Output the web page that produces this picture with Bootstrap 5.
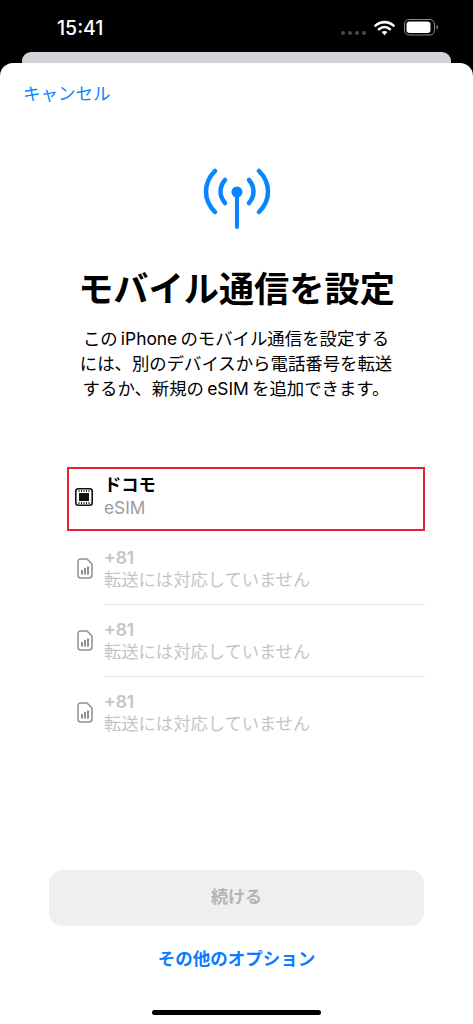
<!DOCTYPE html>
<html lang="ja"><head><meta charset="utf-8">
<link href="https://cdn.jsdelivr.net/npm/bootstrap@5.3.0/dist/css/bootstrap.min.css" rel="stylesheet">
<style>
html,body{height:1024px;overflow:hidden;background:#000}
body{font-family:"Inter","Liberation Sans","Noto Sans CJK JP",sans-serif;width:473px}
.sbar{height:52px;padding:0 0 0 57px;color:#fff}
.clock{font-size:19.5px;font-weight:500;line-height:1;padding-top:19px;width:240px}
.dots{gap:3px;margin:31px 0 0 44px}
.dots i{display:block;width:4px;height:4px;border-radius:50%;background:#4a4a4a}
.wifi{margin:20px 0 0 8px}
.batt{margin:19px 0 0 9px}
.backcard{height:11px;margin:0 22px;background:#d3d2d7;border-radius:9px 9px 0 0}
.sheet{height:961px;background:#fff;border-radius:13px 13px 0 0}
.cancel{color:#0a84ff;font-size:17.5px;line-height:20px;padding:21px 0 0 23px;text-decoration:none;display:block;height:105px}
.ant{display:block;margin:0 auto}
.heading{font-size:35.2px;font-weight:700;line-height:42px;margin:38px 0 0;color:#000;text-align:center}
.desc{font-size:17.4px;line-height:25px;margin:16px 0 0 -1px;color:#000;text-align:center}
.simlist{margin:66px 48px 121px 67px}
.simrow{height:72px}
.simrow.sel{height:64px;border:2px solid #e8202f;margin-bottom:2px}
.simico{width:35px;flex:none;display:flex;justify-content:center;padding-bottom:2px}
.sel .simico{width:30px;padding-bottom:4px}
.simtxt{flex:1;font-size:17.3px;line-height:22px;height:72px;padding-top:14px;border-bottom:1px solid #e5e5e7;margin-left:2px}
.simrow:last-child .simtxt{border-bottom:0}
.sel .simtxt{border:0;height:auto;padding-top:0;margin:-6px 0 0 5px}
.n1{font-weight:700;color:#000;line-height:22px}
.n2{color:#9b9b9f;line-height:23px}
.off{color:#c5c5c7}
.off-num{font-weight:600}
.cta.btn,.cta.btn:disabled{margin:0 0 0 49px;height:56px;width:375px;background:#efeff0;color:#b3b3b5;font-weight:700;font-size:17px;border-radius:14px;border:0;opacity:1;display:flex;align-items:center;justify-content:center}
.more{display:block;text-align:center;color:#0a7cff;font-weight:700;font-size:17.5px;line-height:22px;margin-top:22px;text-decoration:none}
.homebar{width:169px;height:5px;border-radius:3px;background:#000;margin:40px auto 0 152px}
</style></head><body>
<div class="sbar d-flex">
  <div class="clock">15:41</div>
  <div class="dots d-flex"><i></i><i></i><i></i><i></i></div>
  <svg class="wifi" width="21" height="16" viewBox="0 0 21 16"><path d="M1.5 5.6C6.6.9 14.4.9 19.5 5.6" fill="none" stroke="#fff" stroke-width="2.6" stroke-linecap="round"/><path d="M5 9.2c3.2-2.900 7.800-2.900 11 0" fill="none" stroke="#fff" stroke-width="2.6" stroke-linecap="round"/><path d="M7.6 12.1c1.8-1.5 4-1.5 5.8 0L10.500 15.200z" fill="#fff"/></svg>
  <svg class="batt" width="35" height="17" viewBox="0 0 35 17"><rect x=".5" y=".5" width="30" height="15.5" rx="4.5" fill="none" stroke="#8a8a8a"/><rect x="2.5" y="2.5" width="24" height="11.5" rx="3" fill="#fff"/><path d="M32.5 6v4.500c1-.3 1.600-1.200 1.600-2.200s-.6-2-1.600-2.300z" fill="#8a8a8a"/></svg>
</div>
<div class="backcard"></div>
<div class="sheet">
  <a class="cancel" href="#">キャンセル</a>
  <svg class="ant" width="70" height="62" viewBox="0 0 70 62" fill="none" stroke="#0a84ff" stroke-linecap="round">
    <path d="M13 3C1 15 1 32 13 44M57 3c12 12 12 29 0 41" stroke-width="4.5"/>
    <path d="M23 12c-6 7-6 16 0 23M47 12c6 7 6 16 0 23" stroke-width="4.5"/>
    <circle cx="35" cy="24" r="5.5" fill="#0a84ff" stroke="none"/>
    <path d="M35 26V59" stroke-width="4"/>
  </svg>
  <h1 class="heading">モバイル通信を設定</h1>
  <p class="desc">この&#8201;iPhone&#8201;のモバイル通信を設定する<br>には、別のデバイスから電話番号を転送<br>するか、新規の&#8201;eSIM&#8201;を追加できます。</p>
  <div class="simlist">
    <div class="simrow sel d-flex align-items-center">
      <div class="simico"><svg width="20" height="20" viewBox="0 0 20 20"><rect x="1.8" y="1.8" width="16.4" height="16.4" rx="2.5" fill="none" stroke="#111" stroke-width="1.6"/><rect x="5" y="6" width="10" height="8" fill="#111"/><path d="M5 3v2M7.500 3v2M10 3v2M12.500 3v2M15 3v2M5 15v2M7.500 15v2M10 15v2M12.500 15v2M15 15v2" stroke="#111" stroke-width="1"/></svg></div>
      <div class="simtxt"><div class="n1">ドコモ</div><div class="n2">eSIM</div></div>
    </div>
    <div class="simrow d-flex align-items-center">
      <div class="simico"><svg width="16" height="21" viewBox="0 0 16 21" fill="none"><path d="M3.500 1H10l5 5v11a3 3 0 0 1-3 3H4a3 3 0 0 1-3-3V3.500A2.500 2.500 0 0 1 3.500 1z" stroke="#8f8f93" stroke-width="1.5"/><path d="M5 16.500V12M8 16.500V10M11 16.500V8.500" stroke="#8f8f93" stroke-width="2"/></svg></div>
      <div class="simtxt off"><div class="off-num">+81</div><div>転送には対応していません</div></div>
    </div>
    <div class="simrow d-flex align-items-center">
      <div class="simico"><svg width="16" height="21" viewBox="0 0 16 21" fill="none"><path d="M3.500 1H10l5 5v11a3 3 0 0 1-3 3H4a3 3 0 0 1-3-3V3.500A2.500 2.500 0 0 1 3.500 1z" stroke="#8f8f93" stroke-width="1.5"/><path d="M5 16.500V12M8 16.500V10M11 16.500V8.500" stroke="#8f8f93" stroke-width="2"/></svg></div>
      <div class="simtxt off"><div class="off-num">+81</div><div>転送には対応していません</div></div>
    </div>
    <div class="simrow d-flex align-items-center">
      <div class="simico"><svg width="16" height="21" viewBox="0 0 16 21" fill="none"><path d="M3.500 1H10l5 5v11a3 3 0 0 1-3 3H4a3 3 0 0 1-3-3V3.500A2.500 2.500 0 0 1 3.500 1z" stroke="#8f8f93" stroke-width="1.5"/><path d="M5 16.500V12M8 16.500V10M11 16.500V8.500" stroke="#8f8f93" stroke-width="2"/></svg></div>
      <div class="simtxt off"><div class="off-num">+81</div><div>転送には対応していません</div></div>
    </div>
  </div>
  <button class="cta btn" disabled>続ける</button>
  <a class="more" href="#">その他のオプション</a>
  <div class="homebar"></div>
</div>
</body></html>
